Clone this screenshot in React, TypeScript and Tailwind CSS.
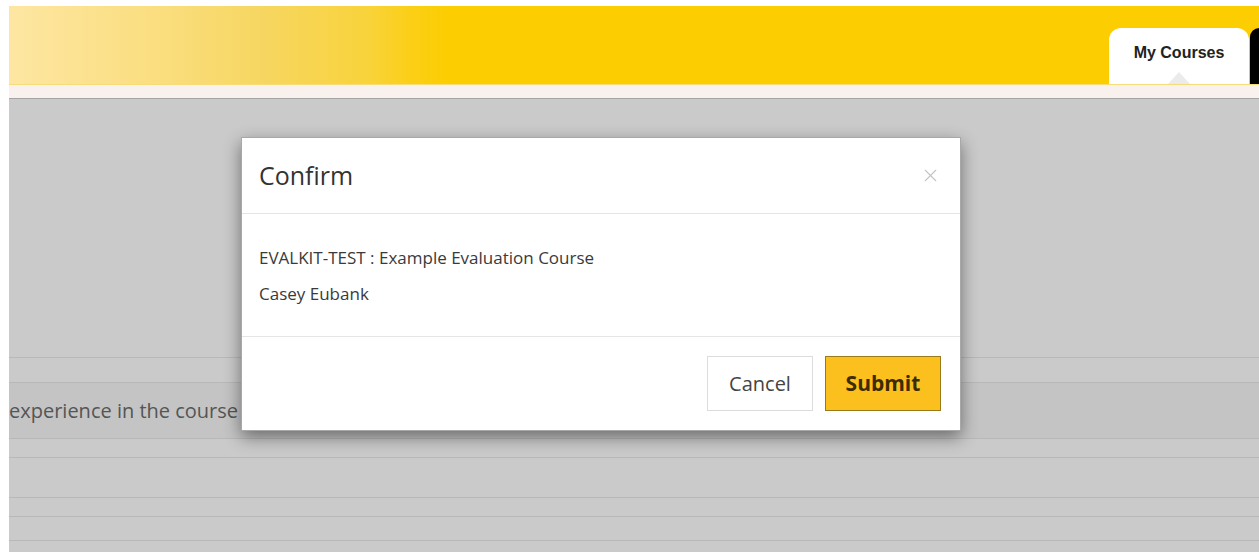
import { X } from 'lucide-react'

const sans = "font-['Open_Sans','Noto_Sans',sans-serif]"

// faded table rows sitting behind the dialog backdrop
function BackgroundRows() {
  return (
    <div className={`flex-1 bg-[#cacaca] ${sans}`}>
      <div className="h-[258px]" />
      <div className="h-[25px] border-t border-[#b8b8b8]" />
      <div className="h-[56px] border-t border-[#b8b8b8] bg-[#c4c4c4] flex items-center">
        <span className="text-[20px] text-[#555] leading-none">experience in the course</span>
      </div>
      <div className="h-[19px] border-t border-[#b8b8b8]" />
      <div className="h-[40px] border-t border-[#b8b8b8]" />
      <div className="h-[19px] border-t border-[#b8b8b8]" />
      <div className="h-[24px] border-t border-[#b8b8b8]" />
      <div className="h-[20px] border-t border-[#b8b8b8]" />
    </div>
  )
}

function Header() {
  return (
    <div className="shrink-0 h-[79px] flex items-end justify-end bg-[linear-gradient(to_right,#fde6a2_0px,#fadd7c_160px,#f6d65f_260px,#f9d33a_360px,#fbcf18_400px,#fccd00_440px,#fccd00_100%)] border-b border-[#f7dd7a]">
      <div className="relative w-[140px] h-[56px] bg-white rounded-t-[12px] flex justify-center pt-[17px]">
        <span className="font-['Liberation_Sans',Arial,sans-serif] font-bold text-[16px] text-[#222] leading-none">
          My Courses
        </span>
        <div className="absolute bottom-0 left-[59px] w-0 h-0 border-l-[11px] border-r-[11px] border-b-[12px] border-l-transparent border-r-transparent border-b-[#ebebeb]" />
      </div>
      <div className="w-[9px] h-[56px] ml-px bg-black rounded-tl-[10px]" />
    </div>
  )
}

function ConfirmDialog() {
  return (
    <div
      className={`absolute left-[241px] top-[137px] w-[720px] bg-white border border-[#a8a8a8] shadow-[0_6px_16px_rgba(0,0,0,0.45)] ${sans}`}
    >
      <div className="h-[76px] flex items-center justify-between pl-[17px] pr-[19px] border-b border-[#e5e5e5]">
        <h4 className="text-[25px] text-[#333] font-normal leading-none">Confirm</h4>
        <X className="w-[21px] h-[21px] text-[#c4c4c4]" strokeWidth={1.3} />
      </div>
      <div className="pt-[33px] pb-[31px] pl-[17px] flex flex-col gap-[14px] text-[17px] leading-[22px] text-[#3a3a3a] border-b border-[#e5e5e5]">
        <p>EVALKIT-TEST : Example Evaluation Course</p>
        <p>Casey Eubank</p>
      </div>
      <div className="h-[93px] flex items-center justify-end gap-[12px] pr-[19px]">
        <button className="w-[106px] h-[55px] bg-white border border-[#dcdcdc] text-[20px] text-[#444]">
          Cancel
        </button>
        <button className="w-[116px] h-[55px] bg-[#fcc01e] border border-[#9a7a1a] text-[21px] font-bold text-[#3d2c00]">
          Submit
        </button>
      </div>
    </div>
  )
}

export default function App() {
  return (
    <div className="relative w-full h-[552px] overflow-hidden bg-white pt-[6px] pl-[9px]">
      <div className="h-full flex flex-col">
        <Header />
        <div className="shrink-0 h-[14px] bg-[#f8f1ee] border-b border-[#a3a3a3]" />
        <BackgroundRows />
      </div>
      <ConfirmDialog />
    </div>
  )
}
